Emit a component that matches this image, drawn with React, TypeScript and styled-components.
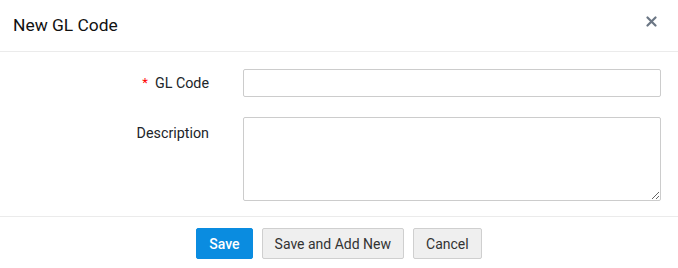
import { useState } from "react";
import styled, { createGlobalStyle } from "styled-components";

const GlobalStyle = createGlobalStyle`
    html, body {
        margin: 0;
        padding: 0;
        background: #fff;
    }
    body {
        font-family: Roboto, "Liberation Sans", Arial, sans-serif;
        color: #212529;
    }
    * {
        box-sizing: border-box;
    }
`;

const StyledModal = styled.section`
    width: 678px;
    height: 268px;
    background: #fff;
`;

const StyledHeader = styled.header`
    display: flex;
    align-items: center;
    justify-content: space-between;
    height: 52px;
    padding: 0 17px 2px 13px;
    border-bottom: 1px solid #ebebeb;
`;

const StyledTitle = styled.h4`
    margin: 0;
    font-size: 17.4px;
    font-weight: 400;
    color: #111;
`;

const StyledClose = styled.button`
    display: flex;
    align-items: center;
    justify-content: center;
    width: 20px;
    height: 20px;
    padding: 0;
    margin-top: -7px;
    border: none;
    background: transparent;
    cursor: pointer;
`;

const StyledBody = styled.div`
    display: grid;
    grid-template-columns: 209px 418px;
    column-gap: 34px;
    row-gap: 20px;
    padding: 17px 0 15px;
    border-bottom: 1px solid #ebebeb;
`;

const StyledLabel = styled.label<{ $top?: number }>`
    display: flex;
    justify-content: flex-end;
    align-items: flex-start;
    padding-top: ${(p) => p.$top ?? 0}px;
    font-size: 14.3px;
    line-height: 28px;
    color: #212529;
`;

const StyledRequired = styled.span`
    margin-right: 7px;
    color: #f00;
    font-size: 13px;
`;

const StyledInput = styled.input`
    width: 418px;
    height: 28px;
    padding: 4px 8px;
    border: 1px solid #ccc;
    border-radius: 2px;
    font: inherit;
    font-size: 14px;
    outline: none;
`;

const StyledTextArea = styled.textarea`
    width: 418px;
    height: 84px;
    padding: 4px 8px;
    border: 1px solid #ccc;
    border-radius: 2px;
    font: inherit;
    font-size: 14px;
    outline: none;
`;

const StyledFooter = styled.footer`
    display: flex;
    justify-content: center;
    gap: 9px;
    padding-top: 11px;
`;

const StyledButton = styled.button<{ $primary?: boolean }>`
    height: 31px;
    padding: 0 12px;
    border: 1px solid ${(p) => (p.$primary ? "#0a8ce0" : "#cfcfcf")};
    border-radius: 2px;
    background: ${(p) => (p.$primary ? "#0a8ce0" : "#efefef")};
    color: ${(p) => (p.$primary ? "#fff" : "#333")};
    font-family: Roboto, "Liberation Sans", Arial, sans-serif;
    font-size: 14px;
    font-weight: ${(p) => (p.$primary ? 500 : 400)};
    cursor: pointer;
`;

function CloseIcon() {
    return (
        <svg width="11" height="11" viewBox="0 0 11 11">
            <path d="M1.5 1.5L9.5 9.5M9.5 1.5L1.5 9.5" stroke="#6b7684" strokeWidth="2.2" strokeLinecap="round" />
        </svg>
    );
}

function App() {
    const [code, setCode] = useState("");
    const [description, setDescription] = useState("");
    return (
        <StyledModal>
            <GlobalStyle />
            <StyledHeader>
                <StyledTitle>New GL Code</StyledTitle>
                <StyledClose aria-label="Close">
                    <CloseIcon />
                </StyledClose>
            </StyledHeader>
            <StyledBody>
                <StyledLabel htmlFor="gl-code">
                    <StyledRequired>*</StyledRequired>GL Code
                </StyledLabel>
                <StyledInput id="gl-code" value={code} onChange={(e) => setCode(e.target.value)} />
                <StyledLabel htmlFor="gl-desc" $top={2}>
                    Description
                </StyledLabel>
                <StyledTextArea id="gl-desc" value={description} onChange={(e) => setDescription(e.target.value)} />
            </StyledBody>
            <StyledFooter>
                <StyledButton $primary>Save</StyledButton>
                <StyledButton>Save and Add New</StyledButton>
                <StyledButton>Cancel</StyledButton>
            </StyledFooter>
        </StyledModal>
    );
}

export default App;
